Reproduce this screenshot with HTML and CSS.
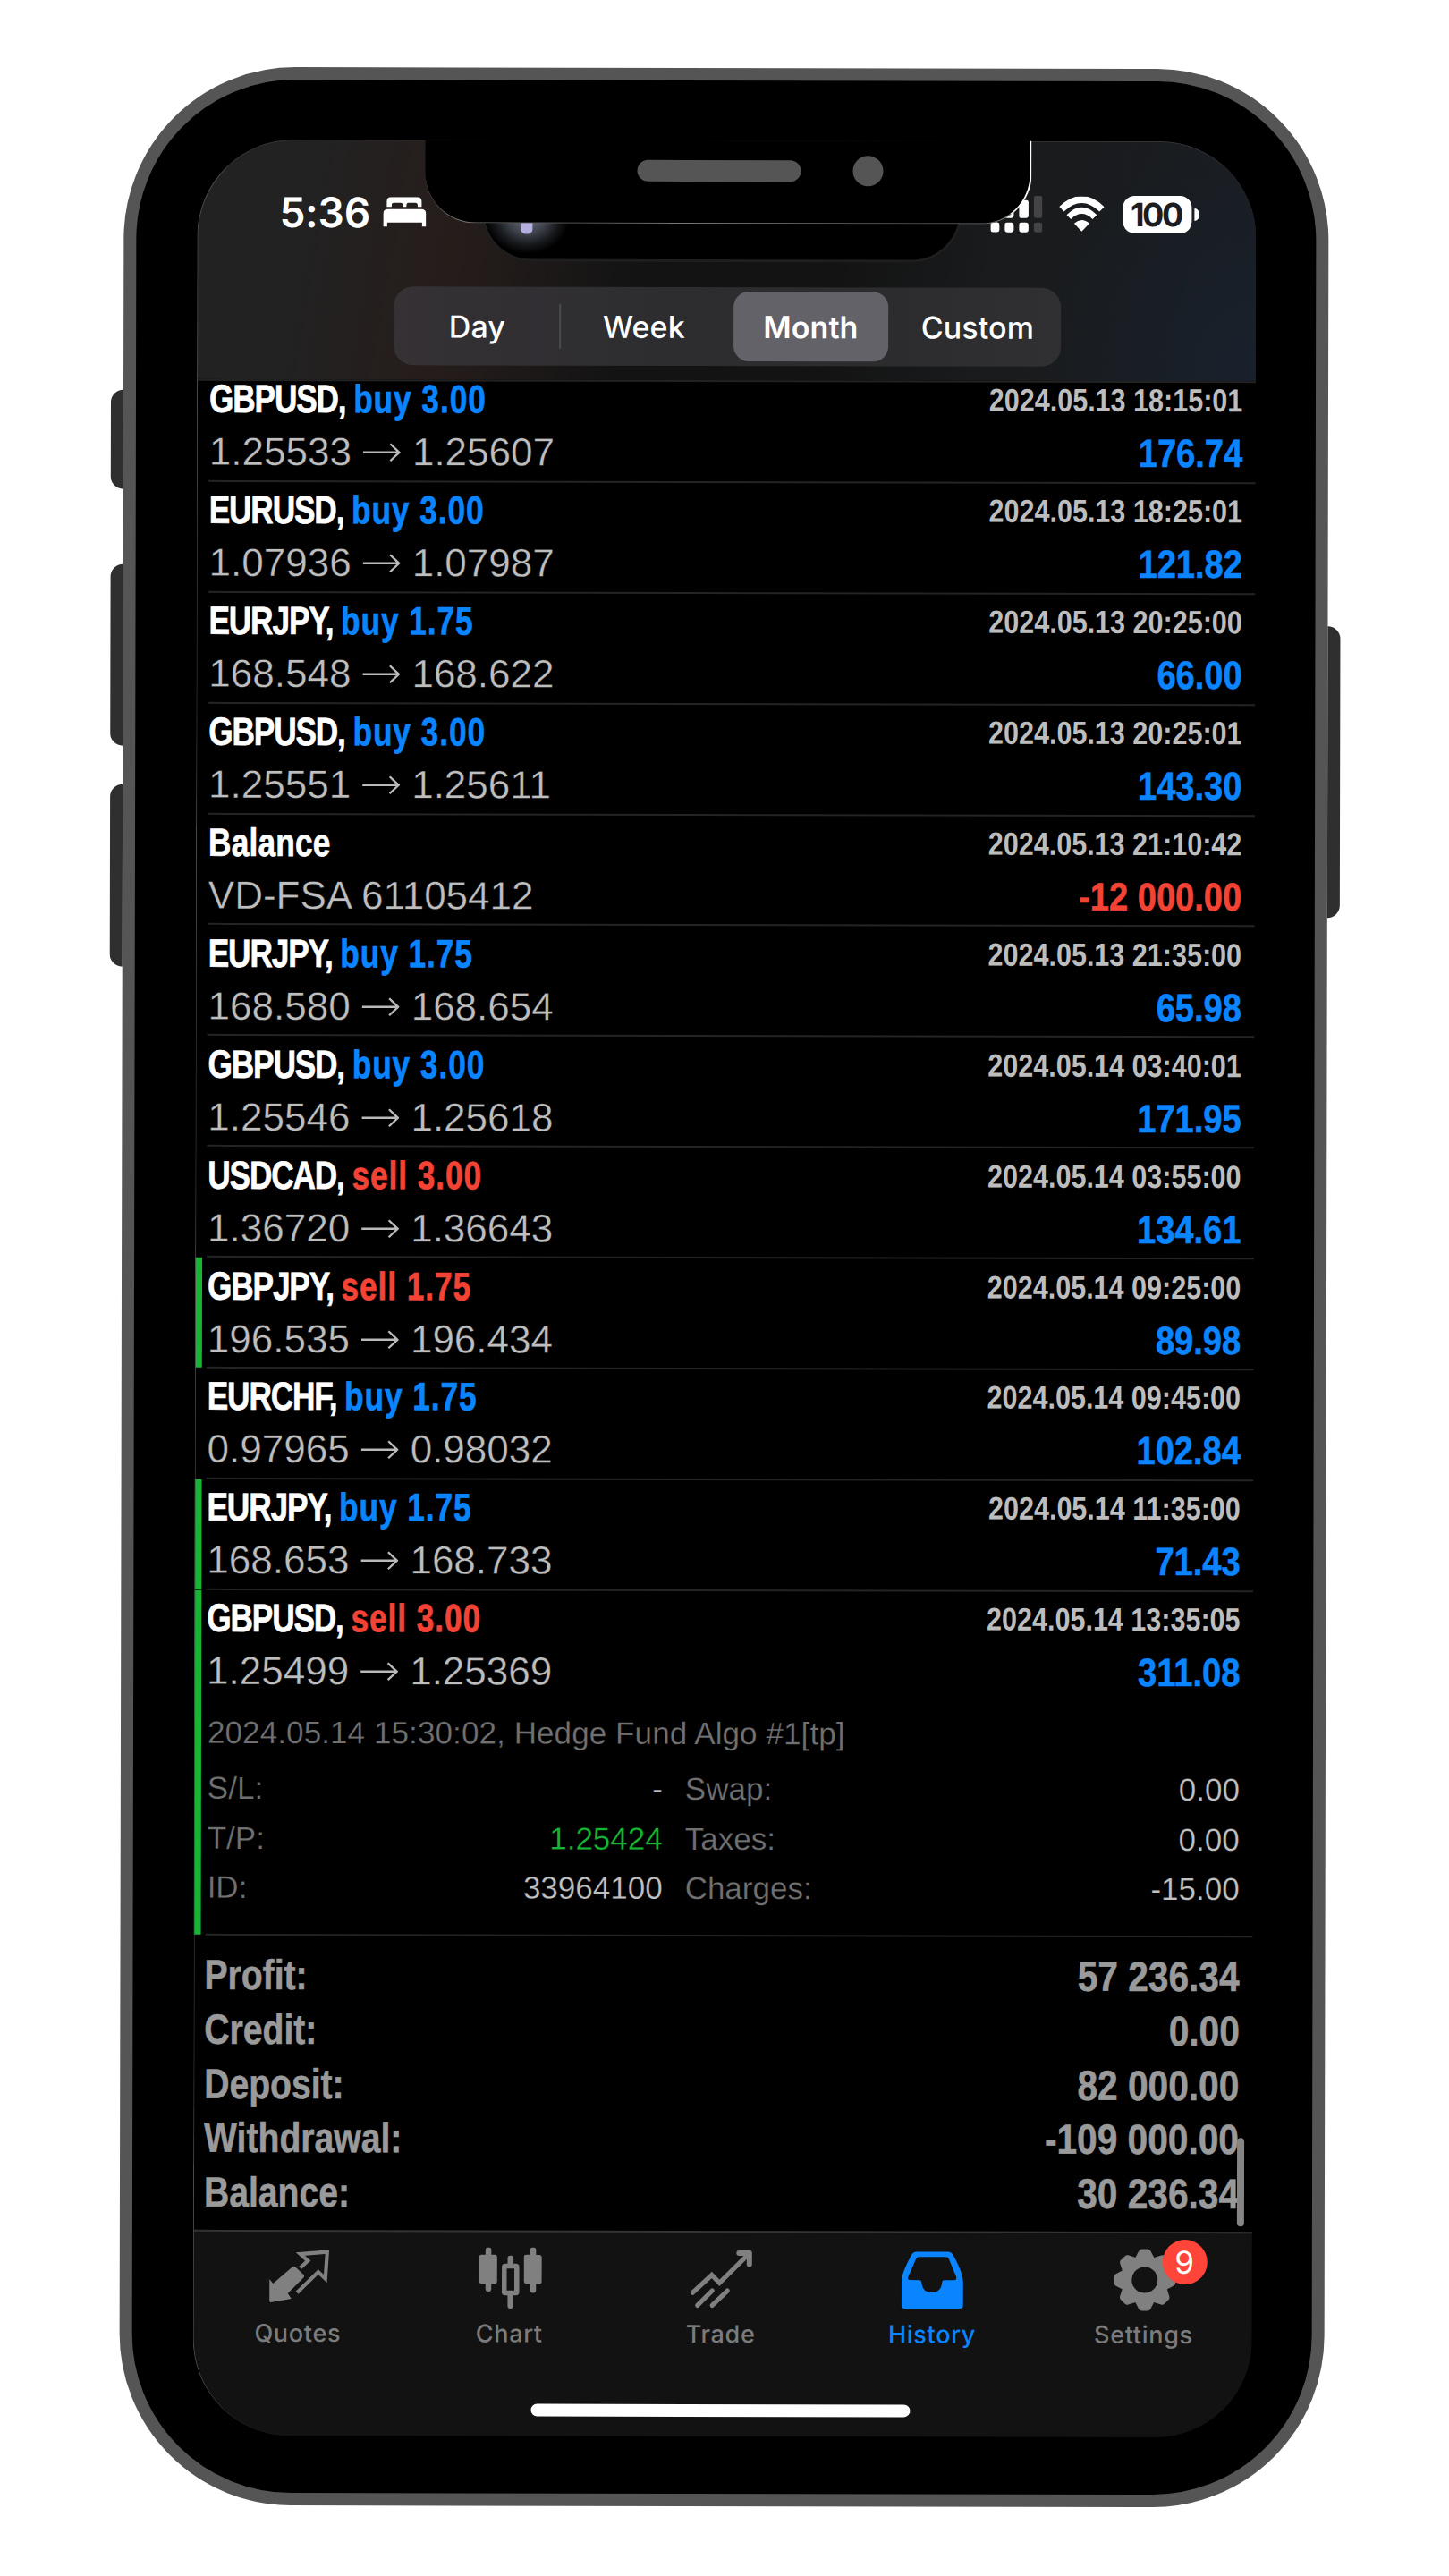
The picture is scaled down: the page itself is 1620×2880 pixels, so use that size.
FILE: index.html
```html
<!DOCTYPE html>
<html lang="en">
<head>
  <meta charset="UTF-8" />
  <meta name="viewport" content="width=device-width, initial-scale=1.0" />
  <title>History</title>
  <link rel="stylesheet" href="styles.css">
</head>
<body>
  <!-- shared arrow between open and close price -->
  <svg width="0" height="0" class="defs">
    <symbol id="arrow" viewBox="0 0 42 24">
      <path d="M0 11.5H40M30.5 2L40.5 11.5L30.5 21" fill="none" stroke="#bababa" stroke-width="2.4" />
    </symbol>
  </svg>

  <div class="phone">
    <div class="side-button mute"></div>
    <div class="side-button volume-up"></div>
    <div class="side-button volume-down"></div>
    <div class="side-button power"></div>

    <div class="screen">
      <div class="island"><div class="glow"></div></div>
      <div class="header">
        <div class="status">
          <span class="time">5:36</span>
          <svg class="bed" width="48" height="34" viewBox="0 0 48 34">
            <path d="M4 11V5Q4 0 9 0H38Q43 0 43 5V11H38.5V9Q38.5 6.500 36 6.500H28.500Q26 6.500 26 9V11H22V9Q22 6.500 19.500 6.500H12Q9.500 6.500 9.500 9V11Z" fill="#fff" />
            <path d="M0 33V19Q0 13.500 5.500 13.500H42.500Q48 13.500 48 19V33H43.500V28.500H4.500V33Z" fill="#fff" />
          </svg>
          <div class="status-right">
            <svg width="58" height="42" viewBox="0 0 58 42">
              <g fill="#fff">
                <rect x="0" y="30" width="10" height="11" rx="2.500" />
                <rect x="16" y="30" width="10" height="11" rx="2.500" />
                <rect x="32" y="30" width="10.500" height="11" rx="2.500" />
                <rect x="16" y="12" width="10" height="13" rx="2.500" />
                <rect x="32" y="5" width="10.500" height="20" rx="2.500" />
              </g>
              <g fill="#444446">
                <rect x="48.500" y="0" width="9.500" height="25" rx="2.500" />
                <rect x="48.500" y="30" width="9.500" height="11" rx="2.500" />
              </g>
            </svg>
            <svg class="wifi" width="52" height="40" viewBox="0 0 52 40">
              <path d="M3.500 14Q26 -7.500 48.500 14" fill="none" stroke="#fff" stroke-width="7.500" />
              <path d="M11.500 22.800Q26 8.500 40.500 22.800" fill="none" stroke="#fff" stroke-width="6.800" />
              <path d="M26 39L17.500 30Q26 22.500 34.500 30Z" fill="#fff" />
            </svg>
            <div class="battery">100</div>
          </div>
        </div>
        <div class="segments">
          <div class="segment">Day</div>
          <div class="segment divided">Week</div>
          <div class="segment active">Month</div>
          <div class="segment">Custom</div>
        </div>
      </div>

      <div class="list">
        <div class="row">
          <div class="deal"><div class="name">GBPUSD, <span class="buy">buy 3.00</span></div><div class="price">1.25533<svg><use href="#arrow" /></svg>1.25607</div></div>
          <div class="result"><div class="date">2024.05.13 18:15:01</div><div class="profit">176.74</div></div>
        </div>
        <div class="row">
          <div class="deal"><div class="name">EURUSD, <span class="buy">buy 3.00</span></div><div class="price">1.07936<svg><use href="#arrow" /></svg>1.07987</div></div>
          <div class="result"><div class="date">2024.05.13 18:25:01</div><div class="profit">121.82</div></div>
        </div>
        <div class="row">
          <div class="deal"><div class="name">EURJPY, <span class="buy">buy 1.75</span></div><div class="price">168.548<svg><use href="#arrow" /></svg>168.622</div></div>
          <div class="result"><div class="date">2024.05.13 20:25:00</div><div class="profit">66.00</div></div>
        </div>
        <div class="row">
          <div class="deal"><div class="name">GBPUSD, <span class="buy">buy 3.00</span></div><div class="price">1.25551<svg><use href="#arrow" /></svg>1.25611</div></div>
          <div class="result"><div class="date">2024.05.13 20:25:01</div><div class="profit">143.30</div></div>
        </div>
        <div class="row">
          <div class="deal"><div class="name plain">Balance</div><div class="price">VD-FSA 61105412</div></div>
          <div class="result"><div class="date">2024.05.13 21:10:42</div><div class="profit loss">-12 000.00</div></div>
        </div>
        <div class="row">
          <div class="deal"><div class="name">EURJPY, <span class="buy">buy 1.75</span></div><div class="price">168.580<svg><use href="#arrow" /></svg>168.654</div></div>
          <div class="result"><div class="date">2024.05.13 21:35:00</div><div class="profit">65.98</div></div>
        </div>
        <div class="row">
          <div class="deal"><div class="name">GBPUSD, <span class="buy">buy 3.00</span></div><div class="price">1.25546<svg><use href="#arrow" /></svg>1.25618</div></div>
          <div class="result"><div class="date">2024.05.14 03:40:01</div><div class="profit">171.95</div></div>
        </div>
        <div class="row">
          <div class="deal"><div class="name">USDCAD, <span class="sell">sell 3.00</span></div><div class="price">1.36720<svg><use href="#arrow" /></svg>1.36643</div></div>
          <div class="result"><div class="date">2024.05.14 03:55:00</div><div class="profit">134.61</div></div>
        </div>
        <div class="row tp">
          <div class="deal"><div class="name">GBPJPY, <span class="sell">sell 1.75</span></div><div class="price">196.535<svg><use href="#arrow" /></svg>196.434</div></div>
          <div class="result"><div class="date">2024.05.14 09:25:00</div><div class="profit">89.98</div></div>
        </div>
        <div class="row">
          <div class="deal"><div class="name">EURCHF, <span class="buy">buy 1.75</span></div><div class="price">0.97965<svg><use href="#arrow" /></svg>0.98032</div></div>
          <div class="result"><div class="date">2024.05.14 09:45:00</div><div class="profit">102.84</div></div>
        </div>
        <div class="row tp">
          <div class="deal"><div class="name">EURJPY, <span class="buy">buy 1.75</span></div><div class="price">168.653<svg><use href="#arrow" /></svg>168.733</div></div>
          <div class="result"><div class="date">2024.05.14 11:35:00</div><div class="profit">71.43</div></div>
        </div>
        <div class="row tp open">
          <div class="deal"><div class="name">GBPUSD, <span class="sell">sell 3.00</span></div><div class="price">1.25499<svg><use href="#arrow" /></svg>1.25369</div></div>
          <div class="result"><div class="date">2024.05.14 13:35:05</div><div class="profit">311.08</div></div>
          <div class="details">
            <div class="comment">2024.05.14 15:30:02, Hedge Fund Algo #1[tp]</div>
            <div class="fields">
              <span>S/L:</span><b>-</b><span>Swap:</span><b>0.00</b>
              <span>T/P:</span><b class="green">1.25424</b><span>Taxes:</span><b>0.00</b>
              <span>ID:</span><b>33964100</b><span>Charges:</span><b>-15.00</b>
            </div>
          </div>
        </div>
      </div>

      <div class="summary">
        <div class="total"><span>Profit:</span><b>57 236.34</b></div>
        <div class="total"><span>Credit:</span><b>0.00</b></div>
        <div class="total"><span>Deposit:</span><b>82 000.00</b></div>
        <div class="total"><span>Withdrawal:</span><b>-109 000.00</b></div>
        <div class="total"><span>Balance:</span><b>30 236.34</b></div>
        <div class="scrollbar"></div>
      </div>

      <div class="tabs">
        <div class="tab">
          <svg width="70" height="70" viewBox="-2 -4 70 70">
            <path d="M0.500 32L4.500 37L26 18.500Q28 17 29.500 18.500L38.500 27Q40 28.500 38.500 30.500L21 48L25 54L2 58Q0.500 58 0.500 56.500Z" fill="#808080" />
            <path d="M34.800 19.500L43.500 11.500L35 4L65 1.500L63 31.500L55 24L31.300 47.300" fill="none" stroke="#808080" stroke-width="4.200" />
          </svg>
          <span>Quotes</span>
        </div>
        <div class="tab">
          <svg width="70" height="70" viewBox="0 0 70 70">
            <g fill="#808080">
              <rect x="7" y="0" width="6.500" height="49.500" rx="3" />
              <rect x="0" y="8.300" width="20" height="32.500" rx="2.500" />
              <rect x="57" y="0" width="6.500" height="51" rx="3" />
              <rect x="50" y="8.300" width="20" height="32.500" rx="2.500" />
              <rect x="31.700" y="9.300" width="6.600" height="14" rx="3" />
              <rect x="31.700" y="50" width="6.600" height="18.500" rx="3" />
            </g>
            <rect x="28" y="21" width="14" height="30" rx="1" fill="none" stroke="#808080" stroke-width="5.500" />
          </svg>
          <span>Chart</span>
        </div>
        <div class="tab">
          <svg width="70" height="70" viewBox="0 -3 70 70">
            <g fill="none" stroke="#808080" stroke-width="5.200" stroke-linecap="round">
              <path d="M2.700 47.200L24 27.500L32.600 36.300L65.600 3.500" stroke-linecap="round" />
              <path d="M54.500 3H66V15.500" stroke-width="6" stroke-linejoin="round" />
              <path d="M8 61.500L24.500 45M24.500 61.500L41.500 45" />
            </g>
          </svg>
          <span>Trade</span>
        </div>
        <div class="tab active">
          <svg width="70" height="70" viewBox="0 -4 70 70">
            <path fill-rule="evenodd" d="M17 0H52Q56 0 58 4Q69 24 69 34V60Q69 63.500 65.500 63.500H3.500Q0 63.500 0 60V34Q0 24 11 4Q13 0 17 0ZM20 5.700Q17.500 5.700 16.300 8L7.600 28Q6.500 31.700 9.500 31.700H20Q22.500 31.700 22.500 34Q23.500 45.500 34 45.500Q44.500 45.500 45.500 34Q45.500 31.700 48 31.700H59Q62.200 31.700 61.300 28L53 8Q52 5.700 49.500 5.700Z" fill="#0a84ff" />
          </svg>
          <span>History</span>
        </div>
        <div class="tab">
          <svg width="70" height="70" viewBox="-35 -35 70 70">
            <defs><path id="tooth" d="M-12 -22L-6.500 -32.500Q-5.500 -34.500 -3 -34.500H3Q5.500 -34.500 6.500 -32.500L12 -22Z" /></defs>
            <g fill="#808080">
              <use href="#tooth" /><use href="#tooth" transform="rotate(45)" /><use href="#tooth" transform="rotate(90)" /><use href="#tooth" transform="rotate(135)" />
              <use href="#tooth" transform="rotate(180)" /><use href="#tooth" transform="rotate(225)" /><use href="#tooth" transform="rotate(270)" /><use href="#tooth" transform="rotate(315)" />
              <circle r="26.500" />
            </g>
            <circle r="14.500" fill="#121212" />
          </svg>
          <span>Settings</span>
          <div class="badge">9</div>
        </div>
        <div class="home-bar"></div>
      </div>

      <div class="notch">
        <div class="speaker"></div>
        <div class="camera"></div>
      </div>
    </div>
  </div>
</body>
</html>
```
FILE: styles.css
```css
* {
  box-sizing: border-box;
}
body {
  margin: 0;
  width: 1620px;
  height: 2880px;
  background: #fff;
  font-family: "Liberation Sans", Arial, sans-serif;
  overflow: hidden;
}
.defs {
  display: block;
}
/* phone body, leaning very slightly to the right */
.phone {
  position: relative;
  width: 1347px;
  height: 2726px;
  margin: 76px 0 0 136px;
  padding: 67px 67px 64px 68px;
  border: 14px solid #555;
  border-radius: 192px;
  background: #000;
  transform: rotate(0.115deg);
}
.side-button {
  position: absolute;
  left: -28px;
  width: 14px;
  background: #2f2f2f;
  border-radius: 14px 0 0 14px;
}
.mute {
  top: 347px;
  height: 111px;
}
.volume-up {
  top: 542px;
  height: 203px;
}
.volume-down {
  top: 788px;
  height: 204px;
}
.power {
  left: auto;
  right: -28px;
  top: 609px;
  height: 326px;
  border-radius: 0 14px 14px 0;
}
.screen {
  position: relative;
  display: flex;
  flex-direction: column;
  height: 2567px;
  border-radius: 108px;
  background: #000;
  overflow: hidden;
}
.screen::after {
  content: "";
  position: absolute;
  inset: 0;
  border-radius: 108px;
  border-left: 1px solid #4a4a4a;
  border-top: 1px solid #333;
}

/* header */
.header {
  position: relative;
  flex: none;
  height: 270px;
  padding: 58px 0 0;
  border-bottom: 2px solid #222;
  background:
    radial-gradient(ellipse 240px 260px at 1183px 250px, rgba(24, 34, 48, 0.7), transparent),
    linear-gradient(100deg, #222 0, #222 130px, #261d1b 300px, #1d1918 400px, #131313 510px, #131313 730px, #191b1c 900px, #1a1d22 1183px);
}
.status {
  display: flex;
  align-items: center;
  height: 46px;
  padding: 0 64px 0 92px;
}
.time {
  width: 116px;
  color: #fff;
  font: 600 46px/46px Inter, sans-serif;
  letter-spacing: -0.2px;
}
.status-right {
  display: flex;
  align-items: center;
  margin-left: auto;
  margin-top: 2px;
}
.wifi {
  margin: 0 20px 0 18px;
}
.battery {
  position: relative;
  width: 77px;
  height: 42px;
  margin-right: 8px;
  border-radius: 13px;
  background: #fff;
  color: #1c1d20;
  font: 700 36px/42px Inter, sans-serif;
  letter-spacing: -2.5px;
  text-indent: -3px;
  text-align: center;
}
.battery::after {
  content: "";
  position: absolute;
  top: 14px;
  right: -8px;
  width: 5px;
  height: 14px;
  border-radius: 0 6px 6px 0;
  background: #fff;
}
.segments {
  display: flex;
  width: 746px;
  height: 88px;
  margin: 60px 0 0 220px;
  padding: 5px 0;
  border-radius: 22px;
  background: linear-gradient(90deg, #353135, #2d2d30 40%, #2c2c2e 75%, #302f31);
}
.segment {
  position: relative;
  width: 186.5px;
  color: #fff;
  font: 450 34px/79px Inter, sans-serif;
  letter-spacing: 0.1px;
  text-align: center;
}
.segment.divided::before {
  content: "";
  position: absolute;
  left: -2px;
  top: 14px;
  width: 2px;
  height: 50px;
  background: #4b4b4f;
}
.segment.active {
  width: 173px;
  margin: 0 6.75px;
  border-radius: 17px;
  background: #636269;
  font-weight: 600;
}

/* dynamic island, showing below the notch */
.island {
  position: absolute;
  z-index: 1;
  left: 318px;
  top: 24px;
  width: 537px;
  height: 112px;
  border: 3px solid #1e1e1e;
  border-radius: 56px;
  background: #000;
  overflow: hidden;
}
.glow {
  position: absolute;
  left: 1px;
  top: 22px;
  width: 94px;
  height: 78px;
  background: radial-gradient(closest-side, #6d7082, #3c4048 45%, #16181b 75%, #000);
}
.glow::after {
  content: "";
  position: absolute;
  left: 40px;
  top: 20px;
  width: 13px;
  height: 36px;
  border-radius: 5px;
  background: #b5aee0;
}
.notch {
  position: absolute;
  z-index: 2;
  left: 255px;
  top: -1px;
  width: 678px;
  height: 94px;
  border-right: 2px solid #fff;
  border-bottom: 1px solid #777;
  border-radius: 0 0 56px 56px;
  background: #000;
}
.speaker {
  position: absolute;
  left: 237px;
  top: 23px;
  width: 183px;
  height: 24px;
  border-radius: 12px;
  background: #555;
}
.camera {
  position: absolute;
  left: 478px;
  top: 18px;
  width: 34px;
  height: 34px;
  border-radius: 50%;
  background: #555;
}

/* deals */
.list {
  flex: none;
  margin-top: -12px;
}
.row {
  position: relative;
  display: flex;
  flex-wrap: wrap;
  justify-content: space-between;
  height: 123.9px;
  padding: 2.4px 15px 0 14px;
  white-space: nowrap;
}
.row::after {
  content: "";
  position: absolute;
  left: 13px;
  right: 0;
  bottom: -1px;
  height: 2px;
  background: #242424;
}
.row.tp::before {
  content: "";
  position: absolute;
  left: 0;
  top: 1px;
  bottom: 0;
  width: 8px;
  background: #16b534;
}
.row.open {
  height: 386px;
}
.name {
  color: #fff;
  font-size: 44px;
  font-weight: bold;
  line-height: 60px;
  letter-spacing: -1.4px;
  transform: scaleX(0.8);
  transform-origin: left;
  -webkit-text-stroke: 0.7px;
}
.name.plain {
  letter-spacing: 0.3px;
}
.buy, .sell {
  letter-spacing: 1.2px;
}
.buy {
  color: #0a84ff;
}
.sell {
  color: #f34334;
}
.price {
  color: #bebebe;
  font-size: 44px;
  line-height: 57.6px;
  -webkit-text-stroke: 0.4px #000;
}
.price svg {
  width: 42px;
  height: 24px;
  margin: 0 13px 2px 13px;
}
.result {
  text-align: right;
}
.date {
  color: #bdbdbd;
  font-size: 36px;
  font-weight: bold;
  line-height: 59px;
  transform: scaleX(0.848);
  transform-origin: right;
}
.profit {
  color: #0a84ff;
  font-size: 44px;
  font-weight: bold;
  line-height: 59px;
  transform: scaleX(0.865);
  transform-origin: right;
  -webkit-text-stroke: 0.6px;
}
.profit.loss {
  color: #f34334;
}
.details {
  width: 100%;
  height: 267px;
  padding-top: 15px;
  color: #707070;
  font-size: 35px;
  -webkit-text-stroke: 0.25px #000;
}
.comment {
  padding-left: 1px;
  line-height: 50px;
  letter-spacing: 0.1px;
}
.fields {
  display: grid;
  grid-template-columns: 200px 310px 200px 1fr;
  margin-top: 9px;
  line-height: 55.5px;
}
.fields span:nth-of-type(odd) {
  padding-left: 1px;
}
.fields span:nth-of-type(even) {
  padding-left: 25px;
}
.fields b {
  color: #c0c0c0;
  font-weight: normal;
  text-align: right;
}
.fields .green {
  color: #16b534;
}

/* totals */
.summary {
  position: relative;
  flex: 1;
  padding: 15.5px 15px 0 12px;
}
.total {
  display: flex;
  justify-content: space-between;
  color: #9a9a9a;
  font-size: 47px;
  font-weight: bold;
  line-height: 60.7px;
  -webkit-text-stroke: 0.6px;
}
.total span {
  transform: scaleX(0.832);
  transform-origin: left;
}
.total b {
  transform: scaleX(0.865);
  transform-origin: right;
}
.scrollbar {
  position: absolute;
  right: 9px;
  bottom: 6px;
  width: 8px;
  height: 99px;
  border-radius: 4px;
  background: #858585;
}

/* bottom tabs */
.tabs {
  position: relative;
  flex: none;
  display: flex;
  height: 230px;
  padding-right: 2px;
  border-top: 2px solid #333;
  background: #121212;
}
.tab {
  position: relative;
  flex: 1;
  display: flex;
  flex-direction: column;
  align-items: center;
  padding-top: 17px;
  color: #7b7b7b;
  font: 450 27px/34px Inter, sans-serif;
  letter-spacing: 0.7px;
}
.tab span {
  margin: 10px 2px 0 0;
}
.tab.active {
  color: #0a84ff;
}
.badge {
  position: absolute;
  left: 138px;
  top: 7px;
  width: 50px;
  height: 50px;
  border-radius: 50%;
  background: #ff453a;
  color: #fff;
  font: 400 35px/50px Inter, sans-serif;
  text-align: center;
}
.home-bar {
  position: absolute;
  left: 378px;
  bottom: 22px;
  width: 424px;
  height: 14px;
  border-radius: 7px;
  background: #fff;
}
```
